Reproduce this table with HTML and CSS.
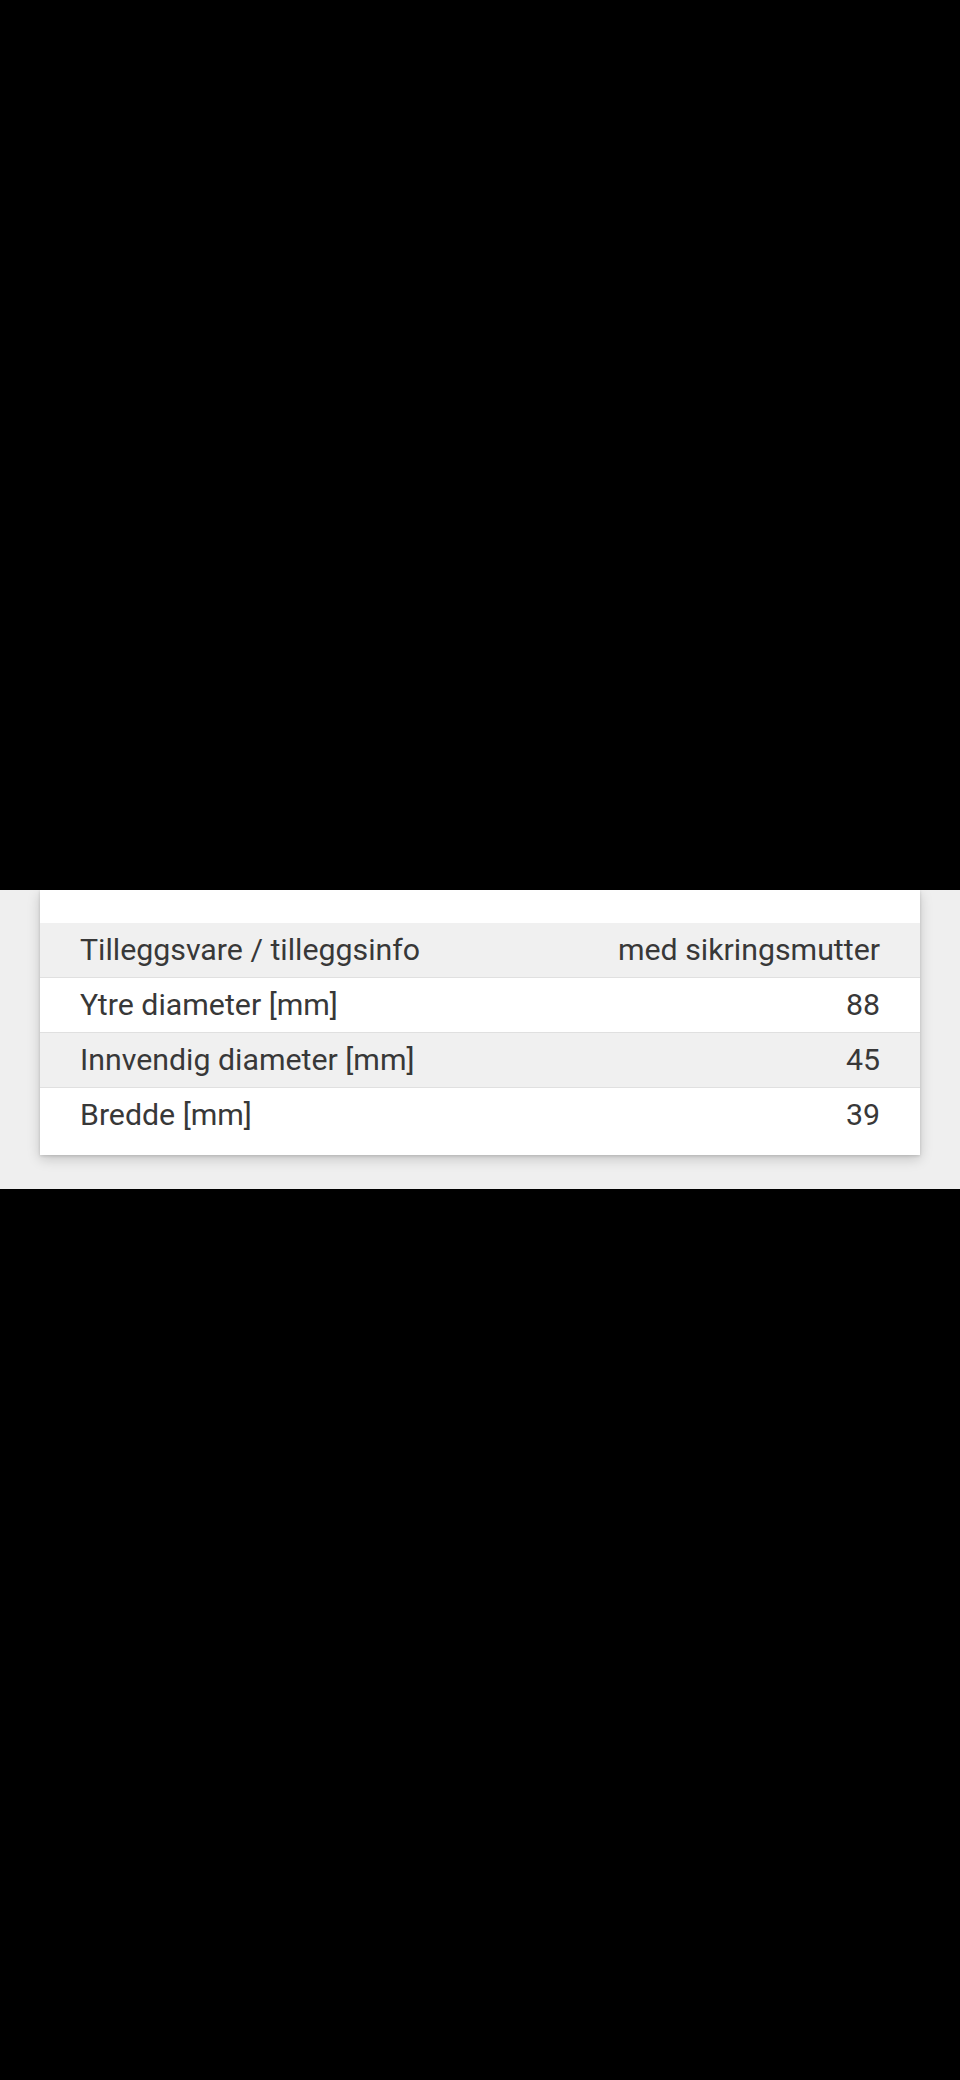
FILE: index.html
```html
<!DOCTYPE html>
<html lang="no">
<head>
<meta charset="utf-8">
<link rel="stylesheet" href="styles.css">
</head>
<body>
<div class="black top"></div>
<section class="panel">
  <div class="card">
    <div class="spacer"></div>
    <div class="row alt"><span>Tilleggsvare / tilleggsinfo</span><span>med sikringsmutter</span></div>
    <div class="row"><span>Ytre diameter [mm]</span><span>88</span></div>
    <div class="row alt"><span>Innvendig diameter [mm]</span><span>45</span></div>
    <div class="row last"><span>Bredde [mm]</span><span>39</span></div>
  </div>
</section>
<div class="black bottom"></div>
</body>
</html>
```

FILE: styles.css
```css
html, body {
  margin: 0;
  padding: 0;
  background: #000;
}
body {
  width: 960px;
  height: 2080px;
  font-family: Roboto, "Liberation Sans", sans-serif;
  overflow: hidden;
}
.black.top {
  height: 890px;
  background: #000;
}
.panel {
  height: 299px;
  background: #efefef;
  padding: 0 40px;
  box-sizing: border-box;
  overflow: hidden;
}
.card {
  background: #fff;
  height: 265px;
  box-shadow: 0 4px 12px rgba(0, 0, 0, 0.18), 0 1px 3px rgba(0, 0, 0, 0.14);
}
.spacer {
  height: 33px;
}
.row {
  display: flex;
  justify-content: space-between;
  align-items: center;
  height: 54px;
  line-height: 54px;
  padding: 0 40px;
  font-size: 30.3px;
  color: #383838;
  border-bottom: 1.5px solid #e0e0e0;
}
.row.alt {
  background: #f0f0f0;
}
.row.last {
  border-bottom: none;
}
.black.bottom {
  height: 891px;
  background: #000;
}
```
